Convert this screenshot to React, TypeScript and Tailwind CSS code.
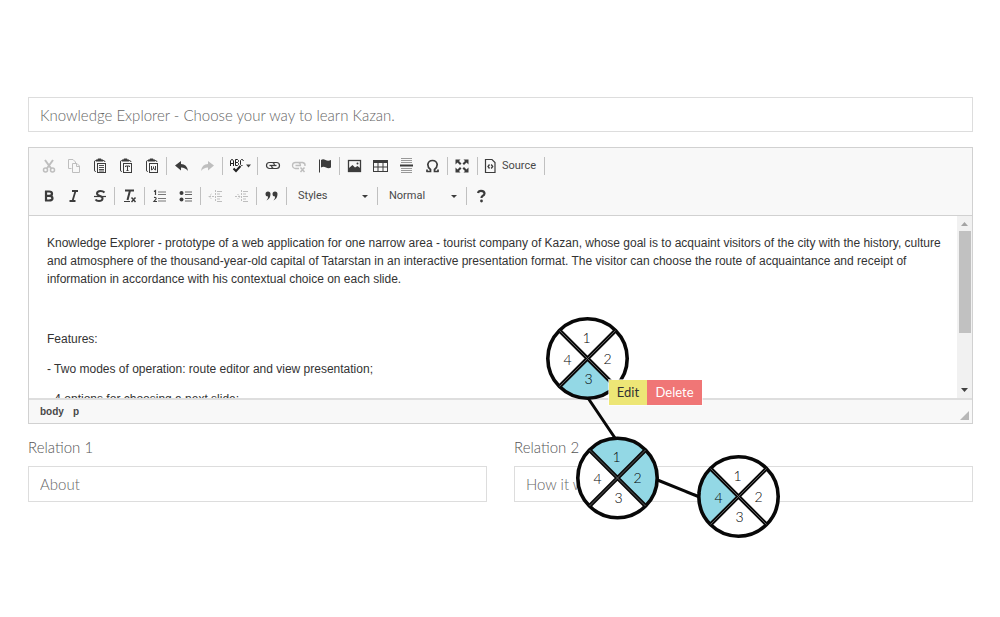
import type { ReactNode } from "react";

const GOTHIC = "font-['Lato',sans-serif] font-light";

function Tool({ label, dim, children }: { label: string; dim?: boolean; children: ReactNode }) {
  return (
    <button
      type="button"
      aria-label={label}
      disabled={dim}
      className={`flex h-6 w-[26px] items-center justify-center ${dim ? "opacity-30" : ""}`}
    >
      <svg width="16" height="16" viewBox="0 0 16 16" fill="none" stroke="#3c3c3c">
        {children}
      </svg>
    </button>
  );
}

function Sep() {
  return <span className="mr-0.5 ml-px h-[18px] w-px bg-[#c0c0c0]" />;
}

function Clipboard({ children }: { children: ReactNode }) {
  return (
    <>
      <path d="M4 2.500H3.500Q2.500 2.500 2.500 4V12Q2.500 13.500 3.500 13.500H4M11 2.500Q13 2.500 13 4" />
      <path d="M4 3.500V1.500H5.500L6 .5H9L9.500 1.500H11V3.500Z" fill="#3c3c3c" stroke="none" />
      <rect x="5.500" y="5.500" width="8" height="9" fill="#f8f8f8" />
      {children}
    </>
  );
}

function Combo({ label, width }: { label: string; width: string }) {
  return (
    <div className={`relative flex h-6 items-center ${width}`}>
      <select
        aria-label={label}
        className="h-6 w-full appearance-none bg-transparent pl-[9px] text-[11px] text-[#484848] outline-none"
      >
        <option>{label}</option>
      </select>
      <svg className="pointer-events-none absolute right-2 top-[11px]" width="6" height="3" viewBox="0 0 6 3">
        <path d="M0 0H6L3 3Z" fill="#3c3c3c" />
      </svg>
    </div>
  );
}

function Toolbar() {
  return (
    <div className="flex flex-col gap-1.5 border-b border-[#d1d1d1] bg-[#f8f8f8] pt-1.5 pb-[7px] pl-1.5">
      <div className="flex items-center">
        <Tool label="Cut" dim>
          <path d="M5 2L11.500 11M13 2L6.500 11" strokeWidth="2" />
          <circle cx="5.500" cy="12" r="2" strokeWidth="1.500" />
          <circle cx="12.500" cy="12" r="2" strokeWidth="1.500" />
        </Tool>
        <Tool label="Copy" dim>
          <path d="M5.500 10.500H2.500V1.500H7L9.500 4V5" />
          <path d="M6.500 5.500H11L13.500 8V14.500H6.500ZM10.500 5.500V8.500H13.500" />
        </Tool>
        <Tool label="Paste">
          <Clipboard>
            <path d="M7 7.500H12M7 9.500H12M7 11.500H12M7 13H12" strokeWidth=".9" />
          </Clipboard>
        </Tool>
        <Tool label="Paste as plain text">
          <Clipboard>
            <path d="M7.500 9V8H11.500V9M9.500 8V12.500M8.500 12.500H10.500" />
          </Clipboard>
        </Tool>
        <Tool label="Paste from Word">
          <Clipboard>
            <path d="M7.500 8V12L9.500 10.500L11.500 12V8M9.500 8.500V10.500" />
          </Clipboard>
        </Tool>
        <Sep />
        <Tool label="Undo">
          <path d="M1 7.500L7 3V6Q13 6 14 13Q11.500 9.500 7 9.500V12.500Z" fill="#3c3c3c" stroke="none" />
        </Tool>
        <Tool label="Redo" dim>
          <path d="M14 7.500L8 3V6Q2 6 1 13Q3.500 9.500 8 9.500V12.500Z" fill="#3c3c3c" stroke="none" />
        </Tool>
        <Sep />
        <button type="button" aria-label="Spell check" className="flex h-6 w-[31px] items-center justify-center">
          <svg width="24" height="16" viewBox="0 0 24 16" fill="none" stroke="#222">
            <path d="M1.500 8V3L2.500 1.500H3.500L4.500 3V8M1.500 5.500H4.500M6.500 7.500V1.500H8.500L9.500 2.500V3.500L8.500 4.500L9.500 5.500V6.500L8.500 7.500ZM6.500 4.500H8.500M14.500 3L13.500 1.500H12.500L11.500 2.500V6.500L12.500 7.500H13.500" />
            <path d="M4.500 10.500L7 13L11.500 8" strokeWidth="2" />
            <path d="M17 6.500H22L19.500 9.500Z" fill="#3c3c3c" stroke="none" />
          </svg>
        </button>
        <Sep />
        <Tool label="Link">
          <path d="M8.500 10.500H4.500A2.500 2.500 0 0 1 4.500 4.500H7.500Q9.500 5 9.500 7.500M8 4.500H11.500A2.500 2.500 0 0 1 11.500 10.500H8.500Q6.500 10 6.500 7.500" strokeWidth="1.200" />
          <path d="M4.500 7.500H11.500" strokeWidth="1.300" />
        </Tool>
        <Tool label="Unlink" dim>
          <path d="M8 10.500H4.500A2.500 2.500 0 0 1 4.500 4.500H7.500Q9.500 5 9.500 7.500M8 4.500H11.500Q14.500 5 14 8M4.500 7.500H10" strokeWidth="1.300" />
          <path d="M9.500 9.500L13.500 14M13.500 9.500L9.500 14" strokeWidth="1.500" />
        </Tool>
        <Tool label="Anchor">
          <path d="M2.500 1.500V14.500" />
          <path d="M4 2Q6 .5 8.500 2T14 2V9.500Q11.500 11 9 9.500T4 9.500Z" fill="#3c3c3c" stroke="none" />
        </Tool>
        <Sep />
        <Tool label="Image">
          <rect x="1.500" y="2.500" width="12" height="11" strokeWidth="1.300" />
          <path d="M2 12V10L5.500 7L8 9.500L10.500 8L13 10V13H2Z" fill="#3c3c3c" stroke="none" />
          <circle cx="10.500" cy="5.500" r="1" fill="#3c3c3c" stroke="none" />
        </Tool>
        <Tool label="Table">
          <rect x=".5" y="2.500" width="14" height="11" />
          <path d="M0 2H15V5H0Z" fill="#3c3c3c" stroke="none" />
          <path d="M5 4V13.500M10 4V13.500M1 9H14" />
        </Tool>
        <Tool label="Horizontal line">
          <path d="M2 .5H13M2 2.500H13M2 4.500H13M2 10.500H13M2 12.500H13M2 14.500H13" stroke="#999" />
          <path d="M1 7.500H14" strokeWidth="2" />
        </Tool>
        <Tool label="Special character">
          <path d="M1.500 13.500H5.500V11.500Q2.800 9.500 2.800 6.500Q3.500 2.500 7.500 2.500T12.200 6.500Q12.200 9.500 9.500 11.500V13.500H13.500M2 14V11.500M13 14V11.500" strokeWidth="1.700" />
        </Tool>
        <Sep />
        <Tool label="Maximize">
          <path d="M.5 1.500H5.500L4 3L6.500 5.500L5 7L2.500 4.500L.5 6.500ZM13.500 1.500H8.500L10 3L7.500 5.500L9 7L11.500 4.500L13.500 6.500ZM.5 14.500H5.500L4 13L6.500 10.500L5 9L2.500 11.500L.5 9.500ZM13.500 14.500H8.500L10 13L7.500 10.500L9 9L11.500 11.500L13.500 9.500Z" fill="#3c3c3c" stroke="none" />
        </Tool>
        <Sep />
        <button type="button" className="flex h-6 w-[63px] items-center gap-1 pl-1 text-[11px] text-[#484848]">
          <svg width="14" height="16" viewBox="0 0 14 16" fill="none" stroke="#3c3c3c">
            <path d="M1.500 1.500H8L11 4.500V14.500H1.500Z" strokeWidth="1.200" />
            <path d="M5.500 6.500L4 8.500L5.500 10.500M7.200 6.500L8.700 8.500L7.200 10.500" strokeWidth="1.300" />
          </svg>
          Source
        </button>
        <Sep />
      </div>
      <div className="flex items-center">
        <Tool label="Bold">
          <path d="M6 3V13M5 3.500H9Q12 3.500 12 5.700T9 7.900H6M9 7.900Q12.500 8 12.500 10.200T9 12.500H5" strokeWidth="2.200" />
        </Tool>
        <Tool label="Italic">
          <path d="M6 3H12M3.500 13H9.500M9.500 3L6.500 13" strokeWidth="1.800" />
        </Tool>
        <Tool label="Strike through">
          <path d="M12.500 4.500Q11 3 8.500 3Q5 3 5 5.500Q5 7 8 8Q11 9 10.500 11Q10 13 7 13Q4.500 13 3.500 11.500" strokeWidth="2" />
          <path d="M2 8.500H14" strokeWidth="1.200" />
        </Tool>
        <Sep />
        <Tool label="Remove format">
          <path d="M3 2.500H12M8 2.500L5.500 12" strokeWidth="2" />
          <path d="M2 13.500H8" />
          <path d="M9.500 9.500L13.500 14M13.500 9.500L9.500 14" strokeWidth="1.500" />
        </Tool>
        <Sep />
        <Tool label="Numbered list">
          <path d="M2 3.500L3.500 2.500V7M2 9.500Q4.500 9 4 11L2 13.500H5" strokeWidth="1.200" />
          <path d="M6 4H14M6 6.500H14M6 10.500H14M6 13H14" stroke="#777" />
        </Tool>
        <Tool label="Bulleted list">
          <circle cx="3.500" cy="5" r="2" fill="#3c3c3c" stroke="none" />
          <circle cx="3.500" cy="11.500" r="2" fill="#3c3c3c" stroke="none" />
          <path d="M7 4H14M7 6.500H14M7 10.500H14M7 13H14" stroke="#666" />
        </Tool>
        <Sep />
        <Tool label="Decrease indent" dim>
          <path d="M1 8.500H6M3.500 6L1 8.500L3.500 11M7.500 2V14" strokeDasharray="2 1" />
          <path d="M9 3.500H14M9 6H12M9 8.500H14M9 11H12M9 13.500H14" />
        </Tool>
        <Tool label="Increase indent" dim>
          <path d="M1 8.500H6M3.500 6L6 8.500L3.500 11M7.500 2V14" strokeDasharray="2 1" />
          <path d="M9 3.500H14M9 6H12M9 8.500H14M9 11H12M9 13.500H14" />
        </Tool>
        <Sep />
        <Tool label="Block quote">
          <path d="M1.500 6A2.500 2.500 0 1 1 6.500 6Q6.500 10.500 2.500 12.500Q4.500 10 4 8.500Q1.500 8.500 1.500 6ZM8.500 6A2.500 2.500 0 1 1 13.500 6Q13.500 10.500 9.500 12.500Q11.500 10 11 8.500Q8.500 8.500 8.500 6Z" fill="#3c3c3c" stroke="none" />
        </Tool>
        <Sep />
        <Combo label="Styles" width="w-[87px]" />
        <Sep />
        <Combo label="Normal" width="w-[85px]" />
        <Sep />
        <Tool label="About">
          <path d="M4 5Q4.500 2.800 7 2.800Q10.500 2.800 10.500 5.500Q10.500 7 8.500 8Q7.500 8.500 7.500 10" strokeWidth="2.200" />
          <circle cx="7.500" cy="13" r="1.400" fill="#3c3c3c" stroke="none" />
        </Tool>
      </div>
    </div>
  );
}

function Editor() {
  return (
    <section className="mt-[15px] border border-[#d1d1d1] font-['Roboto',sans-serif] text-xs font-normal">
      <Toolbar />
      <div className="flex h-[182px]">
        <div
          role="textbox"
          aria-label="Description"
          contentEditable
          suppressContentEditableWarning
          className="flex-1 space-y-3 overflow-hidden pt-[18px] pr-2 pl-[18px] font-['Liberation_Sans',sans-serif] leading-[18px] text-[#333] outline-none"
        >
          <p>
            Knowledge Explorer - prototype of a web application for one narrow area - tourist company of Kazan, whose
            goal is to acquaint visitors of the city with the history, culture and atmosphere of the thousand-year-old
            capital of Tatarstan in an interactive presentation format. The visitor can choose the route of acquaintance
            and receipt of information in accordance with his contextual choice on each slide.
          </p>
          <p>&nbsp;</p>
          <p>Features:</p>
          <p>- Two modes of operation: route editor and view presentation;</p>
          <p>- 4 options for choosing a next slide;</p>
        </div>
        <div className="flex w-[15px] flex-col items-center bg-[#f1f1f1]">
          <svg width="15" height="15" viewBox="0 0 15 15">
            <path d="M4 10L7.500 6L11 10Z" fill="#a3a3a3" />
          </svg>
          <div className="h-[102px] w-3 bg-[#c1c1c1]" />
          <svg className="mt-auto" width="15" height="15" viewBox="0 0 15 15">
            <path d="M4 5H11L7.500 9Z" fill="#404040" />
          </svg>
        </div>
      </div>
      <div className="flex h-[25px] items-center justify-between border-t-2 border-[#dedede] bg-[#f8f8f8] pr-[3px] pl-[11px] font-['Liberation_Sans',sans-serif] text-[10px] font-bold text-[#484848]">
        <div className="flex gap-[9px]">
          <span>body</span>
          <span>p</span>
        </div>
        <svg className="mt-2" width="9" height="9" viewBox="0 0 9 9">
          <path d="M9 0V9H0Z" fill="#b8b8b8" />
        </svg>
      </div>
    </section>
  );
}

function Field({ id, label, value }: { id: string; label: string; value: string }) {
  return (
    <div className="min-w-0 flex-1">
      <label htmlFor={id} className="block text-[15px] leading-6 text-[#555]">
        {label}
      </label>
      <input
        id={id}
        defaultValue={value}
        className="mt-[7px] block h-9 w-full border border-[#ddd] bg-white px-[11px] text-[15px] text-[#666] outline-none"
      />
    </div>
  );
}

const WEDGES = [
  "M0 0L-28-28A39.600 39.600 0 0 1 28-28Z",
  "M0 0L28-28A39.600 39.600 0 0 1 28 28Z",
  "M0 0L28 28A39.600 39.600 0 0 1-28 28Z",
  "M0 0L-28 28A39.600 39.600 0 0 1-28-28Z",
];
const SPOTS = [
  [-1, -16],
  [20, 5],
  [1, 25],
  [-20, 6],
];

function Node({ x, y, active }: { x: number; y: number; active: number[] }) {
  return (
    <g transform={`translate(${x} ${y})`}>
      <circle r="39" fill="#fff" />
      {active.map((n) => (
        <path key={n} d={WEDGES[n - 1]} fill="#93d8e5" />
      ))}
      <circle r="39.700" fill="none" stroke="#080808" strokeWidth="3.600" />
      <path d="M-28-28L28 28M28-28L-28 28" stroke="#0a0a0a" strokeWidth="4" />
      <path d="M-28-28L28 28M28-28L-28 28" stroke="#666" strokeWidth=".9" />
      {SPOTS.map(([dx, dy], i) => (
        <text key={i} x={dx} y={dy} textAnchor="middle" fontSize="14" fill="#000">
          {i + 1}
        </text>
      ))}
    </g>
  );
}

function RouteMap() {
  return (
    <div className="pointer-events-none absolute top-[310px] left-[540px]">
      <svg width="250" height="240" viewBox="0 0 250 240">
        <path d="M48 88L77 131M115 169L162 188" stroke="#080808" strokeWidth="3" />
        <Node x={47.5} y={48.5} active={[3]} />
        <Node x={77.5} y={168} active={[1, 2]} />
        <Node x={198.5} y={186.5} active={[4]} />
      </svg>
      <div className="pointer-events-auto absolute top-[69px] left-[68px] flex h-[27px] border border-white/60 text-[13px] font-normal">
        <button type="button" className="w-[38px] bg-[#ede676] text-[#333]">
          Edit
        </button>
        <button type="button" className="w-[55px] bg-[#f07676] text-white">
          Delete
        </button>
      </div>
    </div>
  );
}

export default function App() {
  return (
    <main className={`relative min-h-screen bg-white px-7 pt-[97px] ${GOTHIC}`}>
      <div className="-mr-px">
        <input
          aria-label="Title"
          defaultValue="Knowledge Explorer - Choose your way to learn Kazan."
          className="block h-[35px] w-full border border-[#ddd] bg-white px-[11px] text-[15px] text-[#666] outline-none"
        />
        <Editor />
        <div className="mt-[11px] flex gap-[27px]">
          <Field id="relation-1" label="Relation 1" value="About" />
          <Field id="relation-2" label="Relation 2" value="How it works" />
        </div>
      </div>
      <RouteMap />
    </main>
  );
}
